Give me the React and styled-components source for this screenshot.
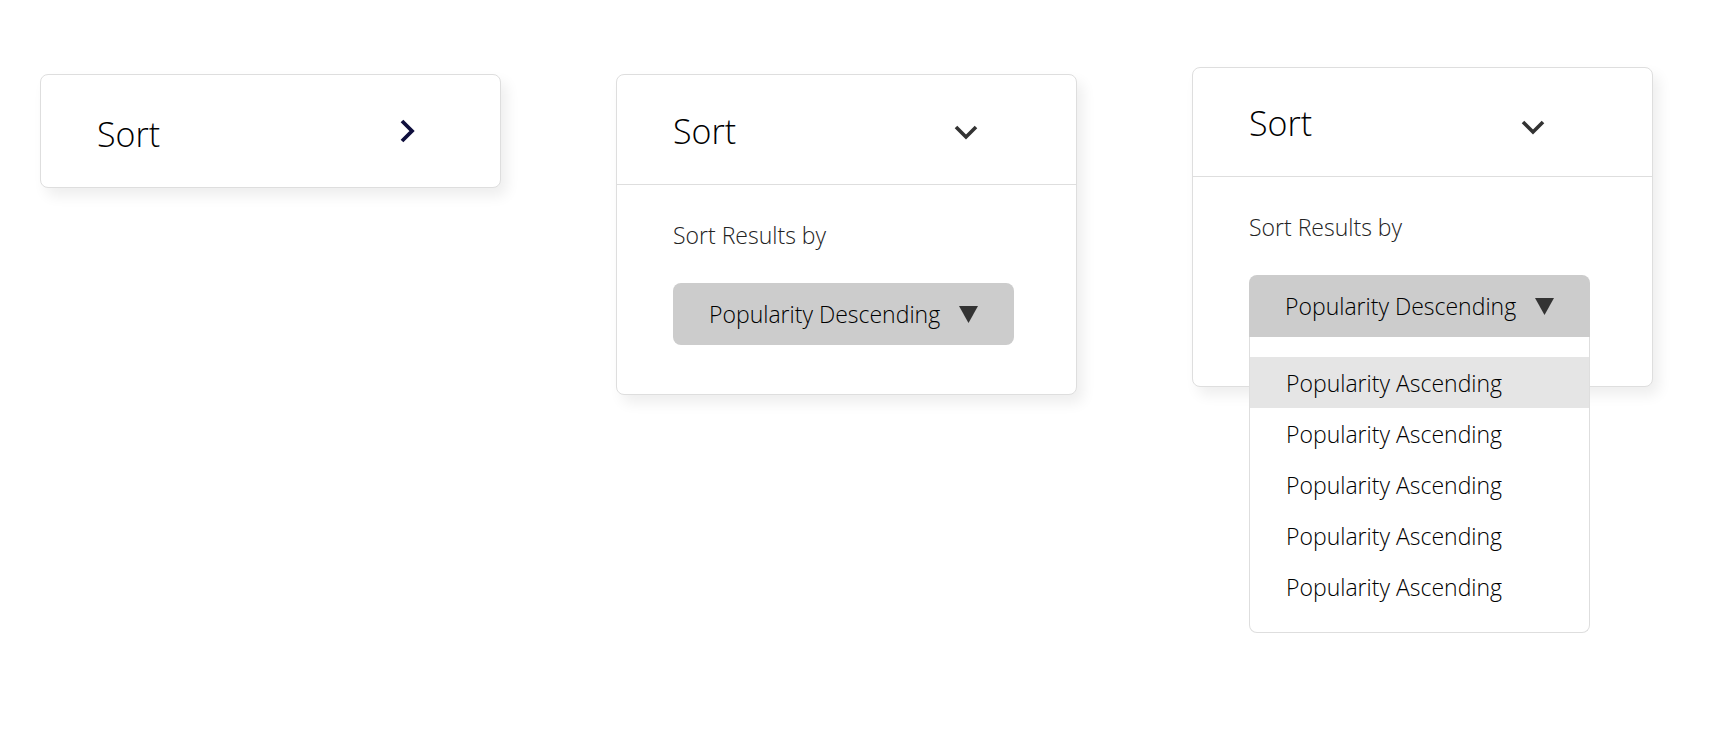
import React from 'react';
import styled, { createGlobalStyle } from 'styled-components';

const options = [
  'Popularity Ascending',
  'Popularity Ascending',
  'Popularity Ascending',
  'Popularity Ascending',
  'Popularity Ascending',
];

const GlobalStyle = createGlobalStyle`
  body {
    margin: 0;
    background: #ffffff;
    font-family: 'Open Sans', 'Noto Sans', sans-serif;
    font-weight: 300;
  }
`;

const Page = styled.div`
  display: flex;
  align-items: flex-start;
  gap: 115px;
  min-height: 755px;
  box-sizing: border-box;
  padding: 74px 0 0 40px;
`;

const Card = styled.div`
  width: 461px;
  box-sizing: border-box;
  margin-top: ${(p) => (p.$lift ? `-${p.$lift}px` : '0')};
  background: #ffffff;
  border: 1px solid #dedede;
  border-radius: 8px;
  box-shadow: 6px 8px 14px rgba(0, 0, 0, 0.07);
`;

const Header = styled.div`
  display: flex;
  align-items: center;
  justify-content: space-between;
  height: ${(p) => p.$height}px;
  padding: 0 ${(p) => p.$right}px 0 56px;
  border-bottom: ${(p) => (p.$open ? '1px solid #dedede' : 'none')};
`;

const Title = styled.span`
  font-size: 34px;
  line-height: 40px;
  color: #000000;
  margin-top: ${(p) => p.$drop || 0}px;
`;

const Icon = styled.svg`
  display: block;
  flex-shrink: 0;
  margin-top: ${(p) => p.$drop || 0}px;
`;

const Body = styled.div`
  display: flex;
  flex-direction: column;
  align-items: flex-start;
  gap: 33px;
  padding: 35px 55px 49px 56px;
`;

const Label = styled.div`
  font-size: 23px;
  line-height: 30px;
  color: #222222;
`;

const SelectWrap = styled.div`
  position: relative;
`;

const SelectButton = styled.div`
  display: inline-flex;
  align-items: center;
  gap: 19px;
  height: 62px;
  padding: 0 36px;
  box-sizing: border-box;
  background: #cccccc;
  border-radius: ${(p) => (p.$open ? '8px 8px 0 0' : '8px')};
  font-size: 23px;
  color: #000000;
`;

const Menu = styled.ul`
  position: absolute;
  top: 100%;
  left: 0;
  right: 0;
  margin: 0;
  padding: 20px 0;
  list-style: none;
  background: #ffffff;
  border: 1px solid #dedede;
  border-top: none;
  border-radius: 0 0 8px 8px;
  z-index: 2;
`;

const Item = styled.li`
  height: 51px;
  display: flex;
  align-items: center;
  padding-left: 36px;
  font-size: 23px;
  color: #000000;
  background: ${(p) => (p.$active ? '#e5e5e5' : 'transparent')};
`;

const ChevronRight = () => (
  <Icon width="16" height="24" viewBox="0 0 16 24">
    <polyline points="3,2 13,12 3,22" fill="none" stroke="#0f0f3d" strokeWidth="3.8" />
  </Icon>
);

const ChevronDown = ({ drop }) => (
  <Icon $drop={drop} width="24" height="15" viewBox="0 0 24 15">
    <polyline points="2,2 12,12 22,2" fill="none" stroke="#333333" strokeWidth="3.6" />
  </Icon>
);

const Triangle = () => (
  <Icon width="19" height="17" viewBox="0 0 19 17">
    <polygon points="0,0 19,0 9.5,17" fill="#333333" />
  </Icon>
);

const Select = ({ open }) => (
  <SelectWrap>
    <SelectButton $open={open}>
      <span>Popularity Descending</span>
      <Triangle />
    </SelectButton>
    {open && (
      <Menu>
        {options.map((o, i) => (
          <Item key={i} $active={i === 0}>
            {o}
          </Item>
        ))}
      </Menu>
    )}
  </SelectWrap>
);

export default function App() {
  return (
    <>
      <GlobalStyle />
      <Page>
        <Card>
          <Header $height={112} $right={85}>
            <Title $drop={6}>Sort</Title>
            <ChevronRight />
          </Header>
        </Card>

        <Card>
          <Header $open $height={109} $right={98}>
            <Title $drop={2}>Sort</Title>
            <ChevronDown drop={6} />
          </Header>
          <Body>
            <Label>Sort Results by</Label>
            <Select />
          </Body>
        </Card>

        <Card $lift={7}>
          <Header $open $height={108} $right={107}>
            <Title $drop={2}>Sort</Title>
            <ChevronDown drop={10} />
          </Header>
          <Body>
            <Label>Sort Results by</Label>
            <Select open />
          </Body>
        </Card>
      </Page>
    </>
  );
}
